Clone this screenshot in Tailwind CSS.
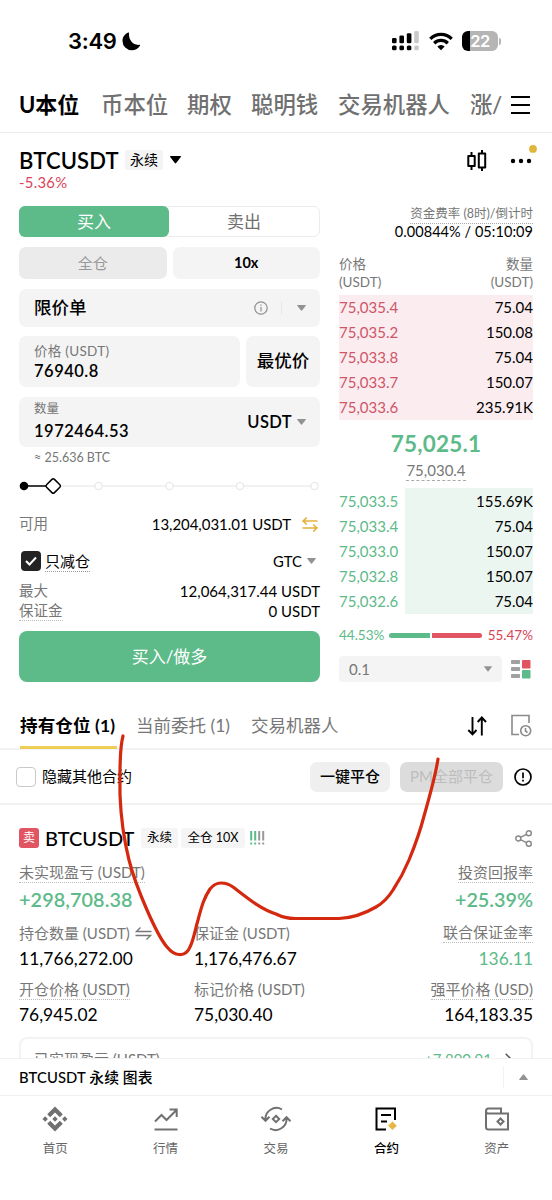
<!DOCTYPE html>
<html lang="zh-CN">
<head>
<meta charset="utf-8">
<meta name="viewport" content="width=device-width, initial-scale=1">
<title>BTCUSDT 永续</title>
<script src="https://cdn.jsdelivr.net/npm/@tailwindcss/browser@4"></script>
</head>
<body class="bg-white">
<div class="relative w-[552px] h-[1200px] overflow-hidden bg-white text-black font-['Lato','Noto_Sans_CJK_SC',sans-serif] flex flex-col whitespace-nowrap">

  <!-- status bar -->
  <div class="h-[82px] shrink-0 flex items-center justify-between pl-[68px] pr-[51px]">
    <div class="flex items-center gap-[5px]">
      <span class="font-['Inter'] font-semibold text-[22px] leading-6 tracking-[-0.300px]">3:49</span>
      <svg class="mt-px" width="19" height="19" viewBox="0 0 19 19"><path d="M6.300.6C3 1.800.5 5 .5 9a9.300 9.300 0 0 0 9.300 9.300c3.600 0 6.700-1.900 8.300-4.800.2-.5-.1-.8-.6-.7C11.500 13.600 6.500 8.500 7 1.300c.1-.5-.2-.9-.7-.7Z"/></svg>
    </div>
    <div class="flex items-center">
      <svg width="27" height="20" viewBox="0 0 27 20"><rect x="0" y="7" width="4.600" height="5.300" rx="1.300"/><rect x="7.400" y="4.500" width="4.600" height="7.800" rx="1.300"/><rect x="14.800" y="2.300" width="4.600" height="10" rx="1.300"/><rect x="22.200" y="0" width="4.600" height="12.300" rx="1.300" fill="#c9c9c9"/><rect x="0" y="14.500" width="4.600" height="4.800" rx="1.500"/><rect x="7.400" y="14.500" width="4.600" height="4.800" rx="1.500"/><rect x="14.800" y="14.500" width="4.600" height="4.800" rx="1.500"/><rect x="22.200" y="14.500" width="4.600" height="4.800" rx="1.500" fill="#c9c9c9"/></svg>
      <svg width="24" height="19" viewBox="0 0 24 19" class="ml-[10px] mr-[9px]"><g fill="none" stroke="#000" stroke-width="3.300"><path d="M1.300 6.800a15.200 15.200 0 0 1 21.400 0"/><path d="M5.200 11.200a9.700 9.700 0 0 1 13.600 0"/></g><path d="M8.300 14.500a5.300 5.300 0 0 1 7.400 0L12 18.300Z"/></svg>
      <div class="flex items-center gap-px">
        <div class="w-[36px] h-[20px] rounded-[6px] bg-[linear-gradient(90deg,#000_8px,#b5b5b5_8px)] text-white font-['Inter'] font-semibold text-[16.500px] leading-[20px] text-center tracking-[-0.500px]">22</div>
        <div class="w-[2px] h-[7px] rounded-r-full bg-[#b5b5b5]"></div>
      </div>
    </div>
  </div>

  <!-- product tabs -->
  <div class="h-[51px] shrink-0 border-b border-[#ececec] flex items-center text-[22.400px] leading-[30px] font-medium text-[#707070] pl-[19px] pb-[5px]">
    <div class="w-[483px] overflow-hidden flex">
      <span class="w-[82px] shrink-0 text-black font-bold text-[22px]">U本位</span>
      <span class="w-[86px] shrink-0">币本位</span>
      <span class="w-[64px] shrink-0">期权</span>
      <span class="w-[87px] shrink-0">聪明钱</span>
      <span class="w-[132px] shrink-0">交易机器人</span>
      <span class="tracking-[-0.400px]">涨/跌</span>
    </div>
    <svg class="ml-[9px]" width="19" height="18" viewBox="0 0 19 18" fill="none" stroke="#000" stroke-width="2"><path d="M0 1h19M0 9h19M0 17h19"/></svg>
  </div>

  <!-- symbol header -->
  <div class="h-[73px] shrink-0 pl-[19px] pr-[15px] pt-3 flex justify-between">
    <div>
      <div class="h-[30px] flex items-center">
        <span class="text-[22px] font-semibold w-[106px] pt-px tracking-[0.150px]">BTCUSDT</span>
        <span class="bg-[#f4f4f4] rounded-[3px] w-[38px] h-[20px] text-[14px] leading-[20px] text-center">永续</span>
        <svg class="ml-[7px]" width="11" height="8" viewBox="0 0 11 8"><path d="M.5 0h10q.700.200.300.900L6.200 7q-.700.800-1.400 0L.2.900Q-.2.200.5 0Z"/></svg>
      </div>
      <div class="h-[14px] leading-[15px] text-[14.800px] tracking-[0.300px] text-[#d94458]">-5.36%</div>
    </div>
    <div class="h-[30px] flex items-center pt-px">
      <svg width="20" height="22" viewBox="0 0 20 22" fill="none" stroke="#000" stroke-width="2" stroke-linejoin="round"><path d="M4.500 2v4M4.500 16v4M15 0v4M15 18v3"/><rect x="1.300" y="6" width="6.400" height="10"/><rect x="11.800" y="3.500" width="6.400" height="14"/></svg>
      <svg class="ml-[22px] -mt-px" width="28" height="30" viewBox="0 0 28 30"><circle cx="4" cy="16" r="2.200"/><circle cx="12" cy="16" r="2.200"/><circle cx="20" cy="16" r="2.200"/><circle cx="24" cy="3.900" r="3.900" fill="#e0b63d"/></svg>
    </div>
  </div>

  <!-- trade form and order book -->
  <div class="h-[490px] shrink-0 flex justify-between pl-[19px] pr-[19px]">
    <div class="w-[301px] flex flex-col">
      <div class="h-[31px] flex rounded-[6px] border border-[#ececec] text-[17px]">
        <div class="w-[150px] -my-px -ml-px rounded-[6px] bg-[#5dba89] text-white flex items-center justify-center">买入</div>
        <div class="flex-1 flex items-center justify-center text-[#707070]">卖出</div>
      </div>
      <div class="mt-[10px] h-[32px] flex gap-[6px]">
        <div class="flex-1 rounded-[7px] bg-[#ebebeb] text-[#999] text-[15px] flex items-center justify-center">全仓</div>
        <div class="flex-1 rounded-[7px] bg-[#f4f4f4] text-[14.500px] font-bold flex items-center justify-center">10x</div>
      </div>
      <div class="mt-[10px] h-[38px] rounded-[7px] bg-[#f4f4f4] flex items-center pl-[15px] pr-[14px]">
        <span class="text-[17.500px] font-medium flex-1">限价单</span>
        <svg width="14" height="14" viewBox="0 0 14 14" fill="none" stroke="#8f8f8f" stroke-width="1.200"><circle cx="7" cy="7" r="6.200"/><path d="M7 6v4.500M7 3.400v1.400"/></svg>
        <div class="w-px h-[14px] bg-[#e7e7e7] ml-[13px] mr-[15px]"></div>
        <svg width="9" height="6" viewBox="0 0 9 6" fill="#929292"><path d="M.5 0h8q.500.200.200.700L5 5.500q-.500.500-1 0L.3.700Q0 .2.500 0Z"/></svg>
      </div>
      <div class="mt-[9px] h-[51px] flex gap-[6px]">
        <div class="w-[221px] rounded-[7px] bg-[#f4f4f4] pl-[15px] pt-[6px]">
          <div class="text-[13.500px] leading-[18px] tracking-[0.300px] text-[#777]">价格 (USDT)</div>
          <div class="text-[16.500px] leading-[22px] font-semibold tracking-[0.500px]">76940.8</div>
        </div>
        <div class="flex-1 rounded-[7px] bg-[#f4f4f4] text-[17.500px] font-medium flex items-center justify-center">最优价</div>
      </div>
      <div class="mt-[10px] h-[50px] rounded-[7px] bg-[#f4f4f4] flex items-center pl-[15px] pr-[14px]">
        <div class="flex-1">
          <div class="text-[12.500px] leading-[18px] text-[#777]">数量</div>
          <div class="text-[16.500px] leading-[26px] font-semibold tracking-[0.500px]">1972464.53</div>
        </div>
        <span class="text-[16.500px] font-semibold tracking-[0.400px]">USDT</span>
        <svg class="ml-[5px]" width="9" height="6" viewBox="0 0 9 6" fill="#929292"><path d="M.5 0h8q.500.200.200.700L5 5.500q-.500.500-1 0L.3.700Q0 .2.500 0Z"/></svg>
      </div>
      <div class="mt-[2px] h-[16px] leading-[17px] pl-[15px] text-[12.500px] text-[#777]">≈ 25.636 BTC</div>
      <svg class="mt-[11px]" width="301" height="20" viewBox="0 0 301 20" fill="#fff"><path d="M5 10h290" stroke="#ececec" stroke-width="1.500"/><g stroke="#e9e9e9" stroke-width="1.300"><circle cx="79.500" cy="10" r="3.600"/><circle cx="150.500" cy="10" r="3.600"/><circle cx="221" cy="10" r="3.600"/><circle cx="295.500" cy="10" r="3.600"/></g><path d="M5 10h24" stroke="#000" stroke-width="1.500"/><circle cx="5" cy="10" r="4.300" fill="#000"/><rect x="28.600" y="4.400" width="11.200" height="11.200" rx="1.800" transform="rotate(45 34.200 10)" stroke="#000" stroke-width="1.500"/></svg>
      <div class="mt-[18px] h-[20px] flex items-center">
        <span class="text-[14.500px] text-[#777] flex-1">可用</span>
        <span class="text-[15px] tracking-[-0.050px]">13,204,031.01 USDT</span>
        <svg class="ml-[11px] mr-[2px]" width="16" height="15" viewBox="0 0 16 15" fill="none" stroke="#e3b13c" stroke-width="1.600"><path d="M15.500 4H1.200L4.700.500M.5 11h14.300L11.300 14.500M11.300 7.500l3.500 3.500M1.200 4l3.500 3.500"/></svg>
      </div>
      <div class="mt-[17px] h-[20px] flex items-center">
        <svg class="ml-[2px]" width="20" height="20" viewBox="0 0 20 20"><rect width="20" height="20" rx="4" fill="#232323"/><path d="m5 10 3.500 3.500 6.500-7" fill="none" stroke="#fff" stroke-width="2"/></svg>
        <span class="ml-[4px] text-[15px] leading-[20px] border-b border-dotted border-[#999]">只减仓</span>
        <span class="flex-1"></span>
        <span class="text-[14.800px] pt-px">GTC</span>
        <svg class="ml-[5px] mr-[4px]" width="9" height="6" viewBox="0 0 9 6" fill="#929292"><path d="M.5 0h8q.500.200.200.700L5 5.500q-.500.500-1 0L.3.700Q0 .2.500 0Z"/></svg>
      </div>
      <div class="mt-[10px] h-[20px] flex items-center justify-between"><span class="text-[14.500px] text-[#777]">最大</span><span class="text-[15px]">12,064,317.44 USDT</span></div>
      <div class="h-[20px] flex items-center justify-between"><span class="text-[14.500px] leading-[19px] text-[#777] border-b border-dotted border-[#bbb]">保证金</span><span class="text-[15px]">0 USDT</span></div>
      <div class="mt-[10px] h-[51px] rounded-[8px] bg-[#5dba89] text-white text-[17px] flex items-center justify-center">买入/做多</div>
    </div>

    <!-- order book -->
    <div class="w-[194px] flex flex-col text-[15px]">
      <div class="self-end h-[18px] leading-[15px] text-[12.500px] text-[#777] border-b border-dotted border-[#aaa]">资金费率 (8时)/倒计时</div>
      <div class="self-end h-[16px] leading-[16px] text-[14.500px] tracking-[0.050px]">0.00844% / 05:10:09</div>
      <div class="mt-[15px] mb-[4px] flex justify-between text-[13.500px] leading-[18px] text-[#777]">
        <div>价格<br>(USDT)</div><div class="text-right">数量<br>(USDT)</div>
      </div>
      <div class="bg-[#fbecef] text-[#cf5568] leading-[25px]">
        <div class="flex justify-between"><span>75,035.4</span><span class="text-black">75.04</span></div>
        <div class="flex justify-between"><span>75,035.2</span><span class="text-black">150.08</span></div>
        <div class="flex justify-between"><span>75,033.8</span><span class="text-black">75.04</span></div>
        <div class="flex justify-between"><span>75,033.7</span><span class="text-black">150.07</span></div>
        <div class="flex justify-between"><span>75,033.6</span><span class="text-black">235.91K</span></div>
      </div>
      <div class="mt-[11px] h-[26px] leading-[26px] text-center text-[22.500px] tracking-[0.200px] font-bold text-[#5dba89]">75,025.1</div>
      <div class="mt-[4px] h-[20px] leading-[18px] self-center text-[15px] text-[#777] border-b border-dashed border-[#aaa]">75,030.4</div>
      <div class="mt-[7px] bg-[linear-gradient(90deg,#fff_66px,#ebf6f1_66px)] text-[#5dba89] leading-[25px] h-[126px] pt-px">
        <div class="flex justify-between"><span>75,033.5</span><span class="text-black">155.69K</span></div>
        <div class="flex justify-between"><span>75,033.4</span><span class="text-black">75.04</span></div>
        <div class="flex justify-between"><span>75,033.0</span><span class="text-black">150.07</span></div>
        <div class="flex justify-between"><span>75,032.8</span><span class="text-black">150.07</span></div>
        <div class="flex justify-between"><span>75,032.6</span><span class="text-black">75.04</span></div>
      </div>
      <div class="mt-[13px] h-[16px] flex items-center text-[13.500px]">
        <span class="w-[50px] text-[#5dba89]">44.53%</span>
        <span class="w-[41px] h-[5px] rounded-l-full bg-[#5dba89]"></span>
        <span class="ml-[2px] w-[50px] h-[5px] rounded-r-full bg-[#e15563]"></span>
        <span class="flex-1 text-right text-[#d94458]">55.47%</span>
      </div>
      <div class="mt-[13px] h-[26px] flex items-center">
        <div class="w-[163px] h-[26px] rounded-[4px] bg-[#f4f4f4] flex items-center justify-between pl-[10px] pr-[10px] text-[#777]">0.1<svg width="8" height="6" viewBox="0 0 9 6" fill="#929292"><path d="M.5 0h8q.500.200.200.700L5 5.500q-.500.500-1 0L.3.700Q0 .2.500 0Z"/></svg></div>
        <svg class="ml-[9px]" width="20" height="20" viewBox="0 0 20 20"><g fill="#a0a0a0"><rect x="0" y="1" width="9" height="4" rx=".8"/><rect x="0" y="8" width="9" height="4" rx=".8"/><rect x="0" y="15" width="9" height="4" rx=".8"/></g><rect x="11" y="1" width="8.500" height="8.500" rx=".8" fill="#e15563"/><rect x="11" y="11" width="8.500" height="8.500" rx=".8" fill="#5dba89"/></svg>
      </div>
    </div>
  </div>

  <!-- position tabs -->
  <div class="h-[54px] shrink-0 border-b-2 border-[#f2f2f2] pl-[20px] pr-[20px] flex text-[17.500px] text-[#777]">
    <div class="w-[97px] h-[53px] border-b-[3px] border-[#edcf58] leading-[60px] text-black font-bold text-[17.500px] tracking-[0.150px]">持有仓位 (1)</div>
    <div class="ml-[19px] w-[96px] leading-[60px]">当前委托 (1)</div>
    <div class="ml-[19px] leading-[60px] flex-1">交易机器人</div>
    <svg class="mt-[20px]" width="20" height="20" viewBox="0 0 20 20" fill="none" stroke="#000" stroke-width="1.900"><path d="M5.500 1v17.500M1.300 14l4.200 4.400 4-4.400M14.800 19.500v-18M10.700 6l4.100-4.500L19 6"/></svg>
    <svg class="ml-[24px] mt-[18px]" width="21" height="23" viewBox="0 0 21 23" fill="none" stroke="#8a8a8a" stroke-width="1.600"><path d="M18 9V1.500H1v19h7"/><circle cx="14.700" cy="16.700" r="5"/><path d="M14.500 14v3l2 1.500"/></svg>
  </div>

  <!-- filter row -->
  <div class="h-[55px] shrink-0 border-b-2 border-[#f2f2f2] pl-[16px] pr-[20px] flex items-center">
    <span class="w-[20px] h-[20px] rounded-[4px] border-[1.500px] border-[#c9c9c9]"></span>
    <span class="ml-[6px] text-[15px] flex-1">隐藏其他合约</span>
    <span class="w-[80px] h-[30px] rounded-[7px] bg-[#efefef] text-[15px] font-medium flex items-center justify-center">一键平仓</span>
    <span class="ml-[10px] w-[103px] h-[30px] rounded-[7px] bg-[#dcdcdc] text-[#bdbdbd] text-[15px] flex items-center justify-center">PM全部平仓</span>
    <svg class="ml-[11px]" width="18" height="18" viewBox="0 0 18 18" fill="none" stroke="#000" stroke-width="1.700"><circle cx="9" cy="9" r="8"/><path d="M9 4.500v5.800M9 11.800v1.800"/></svg>
  </div>

  <!-- position card -->
  <div class="h-[253px] shrink-0 overflow-hidden px-[19px]">
    <div class="mt-[18px] h-[30px] flex items-center">
      <span class="w-[20px] h-[20px] rounded-[3px] bg-[#e15563] text-white text-[12px] leading-[20px] text-center">卖</span>
      <span class="ml-[6px] w-[96px] text-[20px] font-medium">BTCUSDT</span>
      <span class="bg-[#f5f5f5] rounded-[3px] w-[37px] h-[20px] text-[12.500px] leading-[20px] text-center">永续</span>
      <span class="ml-[3px] bg-[#f5f5f5] rounded-[3px] w-[64px] h-[20px] text-[12.500px] leading-[20px] text-center">全仓 10X</span>
      <svg class="ml-[5px]" width="15" height="14" viewBox="0 0 15 14" stroke-width="2"><path d="M1.200 0v9.500M1.200 11.500v2M5.200 0v9.500M5.200 11.500v2" stroke="#5dba89"/><path d="M9.200 0v9.500M9.200 11.500v2M13.200 0v9.500M13.200 11.500v2" stroke="#999"/></svg>
      <span class="flex-1"></span>
      <svg width="18" height="17" viewBox="0 0 18 17" fill="none" stroke="#888" stroke-width="1.400"><circle cx="3.300" cy="8.500" r="2.500"/><circle cx="13.800" cy="3.200" r="2.500"/><circle cx="13.800" cy="13.800" r="2.500"/><path d="m5.500 7.400 6-3M5.500 9.600l6 3"/></svg>
    </div>
    <div class="mt-[9px] h-[22px] flex items-start justify-between text-[15px] leading-[20px] text-[#777]"><span class="border-b border-dotted border-[#bbb]">未实现盈亏 (USDT)</span><span class="border-b border-dotted border-[#bbb]">投资回报率</span></div>
    <div class="mt-[3px] h-[26px] flex justify-between text-[19.800px] leading-[25px] text-[#5dba89] font-semibold"><span class="tracking-[0.100px]">+298,708.38</span><span>+25.39%</span></div>
    <div class="mt-[10px] h-[21px] flex text-[15px] leading-[21px] text-[#777]"><span class="w-[175px] flex items-center">持仓数量 (USDT)<svg class="ml-[5px]" width="17" height="13" viewBox="0 0 17 13" fill="none" stroke="#777" stroke-width="1.300"><path d="M16.500 4.500H1.500L5.500.500M.500 8.500h15l-4 4"/></svg></span><span class="flex-1">保证金 (USDT)</span><span class="h-[20px] leading-[19px] border-b border-dotted border-[#bbb]">联合保证金率</span></div>
    <div class="mt-[2px] h-[24px] flex text-[17.400px] leading-[25px]"><span class="w-[175px] tracking-[0.080px]">11,766,272.00</span><span class="flex-1">1,176,476.67</span><span class="text-[#5dba89]">136.11</span></div>
    <div class="mt-[9px] h-[22px] flex items-start text-[15px] leading-[20px] text-[#777]"><span class="w-[175px]"><span class="inline-block border-b border-dotted border-[#bbb]">开仓价格 (USDT)</span></span><span class="flex-1">标记价格 (USDT)</span><span class="border-b border-dotted border-[#bbb]">强平价格 (USD)</span></div>
    <div class="mt-[2px] h-[24px] flex text-[17.400px] leading-[24px]"><span class="w-[175px]">76,945.02</span><span class="flex-1">75,030.40</span><span>164,183.35</span></div>
    <div class="mt-[10px] h-[50px] border-2 border-[#f3f3f3] rounded-[8px] px-[13px] pt-[10px] flex justify-between text-[15px] leading-[20px] text-[#777]"><span>已实现盈亏 (USDT)</span><span class="text-[#5dba89] text-[15px] pr-[6px] flex items-center h-[20px]">+7,890.91<svg class="ml-[13px]" width="7" height="12" viewBox="0 0 7 12" fill="none" stroke="#555" stroke-width="1.500"><path d="m.700.700 5.300 5.300L.7 11.300"/></svg></span></div>
  </div>

  <!-- chart drawer -->
  <div class="h-[38px] shrink-0 border-y border-[#f1f1f1] bg-white pl-[19px] pr-[24px] flex items-center justify-between">
    <span class="text-[14.800px] font-medium tracking-[0.100px]">BTCUSDT 永续 图表</span>
    <div class="flex items-center gap-[15px]"><span class="w-px h-[22px] bg-[#f2f2f2]"></span><svg width="9" height="6" viewBox="0 0 9 6" fill="#929292"><path d="M.5 6h8q.500-.200.200-.700L5 .5Q4.500 0 4 .5L.3 5.300Q0 5.800.5 6Z"/></svg></div>
  </div>

  <!-- bottom navigation -->
  <div class="flex-1 grid grid-cols-5 pt-[9px] text-[12.500px] leading-[18px] text-[#666] text-center">
    <div class="flex flex-col items-center gap-[7px]">
      <svg width="28" height="28" viewBox="0 0 28 28" fill="#707070"><path d="M14 1.500 21.800 9.300l-3 3L14 7.500 9.200 12.300l-3-3ZM14 26.500 21.800 18.700l-3-3L14 20.500 9.200 15.700l-3 3ZM14 11.300l2.700 2.700-2.700 2.700-2.700-2.700ZM4.200 11.300 6.900 14l-2.700 2.700L1.500 14ZM23.800 11.300l2.700 2.700-2.700 2.700-2.700-2.700Z"/></svg><span>首页</span></div>
    <div class="flex flex-col items-center gap-[7px]">
      <svg width="28" height="28" viewBox="0 0 28 28" fill="none" stroke="#707070" stroke-width="2"><path d="M2.500 24.500h23M3 16.500l6.500-6.500 5 5L24.500 5M17.500 4.500h7.200V12"/></svg><span>行情</span></div>
    <div class="flex flex-col items-center gap-[7px]">
      <svg width="32" height="28" viewBox="0 0 32 28" fill="none" stroke="#707070" stroke-width="2"><path d="M22 4.500A11 11 0 0 0 5.500 15M1.500 11.800l4 4 4-4M10 23.500A11 11 0 0 0 26.500 13M22.500 16.200l4-4 4 4"/><path d="m16 10.800 3.200 3.200-3.200 3.200-3.200-3.200Z"/></svg><span>交易</span></div>
    <div class="flex flex-col items-center gap-[7px] text-black font-medium">
      <svg width="28" height="28" viewBox="0 0 28 28" fill="none" stroke="#000" stroke-width="2"><path d="M23 15V3.500H4.500v21H14M9 10h10M9 16.500h6"/><path d="m20.500 16.500 4.300 4.300-4.300 4.300-4.300-4.300Z" fill="#e5b740" stroke="none"/></svg><span>合约</span></div>
    <div class="flex flex-col items-center gap-[7px]">
      <svg width="28" height="28" viewBox="0 0 28 28" fill="none" stroke="#707070" stroke-width="2"><path d="M3 6V22q0 2.500 2.500 2.500H25V8.500H5.500Q3 8.500 3 6t2.500-2.500H18v5"/><path d="m17.500 13.500 3 3-3 3-3-3Z"/></svg><span>资产</span></div>
  </div>

  <!-- freehand annotation -->
  <svg class="absolute inset-0 pointer-events-none" width="552" height="1200" viewBox="0 0 552 1200" fill="none" stroke="#d4280f" stroke-width="3.200" stroke-linecap="round" stroke-linejoin="round"><path d="M123 736C119 750 120 775 120 795C121 820 124 840 129 860C134 880 140 894 147 910C154 926 160 939 167 947C172 953 175 954.500 179 954.500C185 955 188 952 190 947C194 939 195 930 198 920C202 905 204 898 210 889C214 884 217 883 221 883C226 883 229 884 233 887C246 897 260 909 276 914C284 918 288 918.500 295 918.500H339C352 918 364 914 376 907C383 903 388 898 393 890C399 881 404 872 409 860C416 843 420 832 424 816C430 795 435 778 438 759"/></svg>
</div>
</body>
</html>
